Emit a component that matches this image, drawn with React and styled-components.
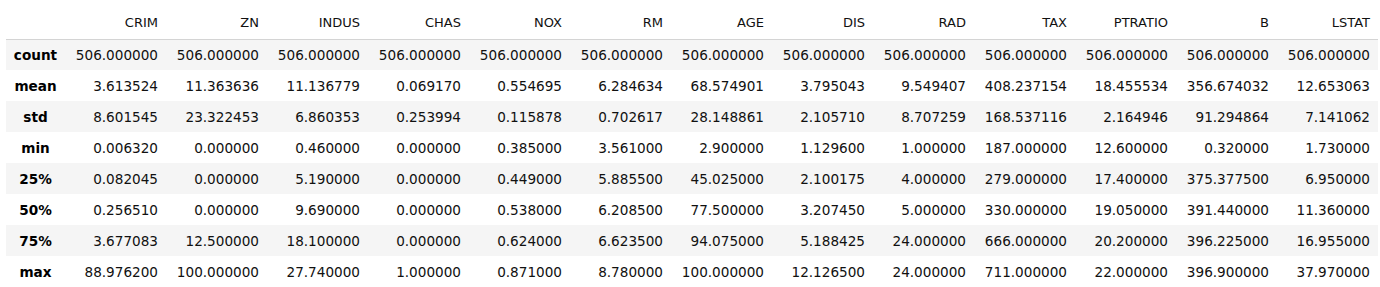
import styled, { createGlobalStyle } from "styled-components";

const GlobalStyle = createGlobalStyle`
  body {
    margin: 0;
    background: #fff;
    overflow: hidden;
  }
`;

const columns = ["CRIM", "ZN", "INDUS", "CHAS", "NOX", "RM", "AGE", "DIS", "RAD", "TAX", "PTRATIO", "B", "LSTAT"];

const rows = [
  ["count", ["506.000000", "506.000000", "506.000000", "506.000000", "506.000000", "506.000000", "506.000000", "506.000000", "506.000000", "506.000000", "506.000000", "506.000000", "506.000000"]],
  ["mean", ["3.613524", "11.363636", "11.136779", "0.069170", "0.554695", "6.284634", "68.574901", "3.795043", "9.549407", "408.237154", "18.455534", "356.674032", "12.653063"]],
  ["std", ["8.601545", "23.322453", "6.860353", "0.253994", "0.115878", "0.702617", "28.148861", "2.105710", "8.707259", "168.537116", "2.164946", "91.294864", "7.141062"]],
  ["min", ["0.006320", "0.000000", "0.460000", "0.000000", "0.385000", "3.561000", "2.900000", "1.129600", "1.000000", "187.000000", "12.600000", "0.320000", "1.730000"]],
  ["25%", ["0.082045", "0.000000", "5.190000", "0.000000", "0.449000", "5.885500", "45.025000", "2.100175", "4.000000", "279.000000", "17.400000", "375.377500", "6.950000"]],
  ["50%", ["0.256510", "0.000000", "9.690000", "0.000000", "0.538000", "6.208500", "77.500000", "3.207450", "5.000000", "330.000000", "19.050000", "391.440000", "11.360000"]],
  ["75%", ["3.677083", "12.500000", "18.100000", "0.000000", "0.624000", "6.623500", "94.075000", "5.188425", "24.000000", "666.000000", "20.200000", "396.225000", "16.955000"]],
  ["max", ["88.976200", "100.000000", "27.740000", "1.000000", "0.871000", "8.780000", "100.000000", "12.126500", "24.000000", "711.000000", "22.000000", "396.900000", "37.970000"]],
];

const Frame = styled.div`
  padding-left: 6px;
`;

const Table = styled.table`
  border-collapse: collapse;
  border-spacing: 0;
  table-layout: fixed;
  width: 1372px;
  font-family: "DejaVu Sans", "Noto Sans CJK JP", sans-serif;
  font-size: 13.6px;
  color: #111;
`;

const HeadRow = styled.tr`
  height: 39px;
  border-bottom: 1px solid #d4d4d4;
`;

const HeadCell = styled.th`
  box-sizing: border-box;
  width: ${(p) => p.$width}px;
  padding: 0 8px 6px 8px;
  text-align: right;
  vertical-align: bottom;
  font-weight: normal;
  font-size: 13px;
  line-height: 20px;
`;

const Row = styled.tr`
  height: 31px;
  background: ${(p) => (p.$striped ? "#f5f5f5" : "#fff")};
`;

const IndexCell = styled.th`
  padding: 0;
  text-align: center;
  vertical-align: middle;
  font-weight: bold;
  color: #000;
`;

const Cell = styled.td`
  padding: 0 8px;
  text-align: right;
  vertical-align: middle;
  white-space: nowrap;
`;

export default function App() {
  return (
    <Frame>
      <GlobalStyle />
      <Table>
        <thead>
          <HeadRow>
            <HeadCell $width={59} />
            {columns.map((c) => (
              <HeadCell key={c} $width={101}>
                {c}
              </HeadCell>
            ))}
          </HeadRow>
        </thead>
        <tbody>
          {rows.map(([label, values], i) => (
            <Row key={label} $striped={i % 2 === 0}>
              <IndexCell>{label}</IndexCell>
              {values.map((v, j) => (
                <Cell key={j}>{v}</Cell>
              ))}
            </Row>
          ))}
        </tbody>
      </Table>
    </Frame>
  );
}
